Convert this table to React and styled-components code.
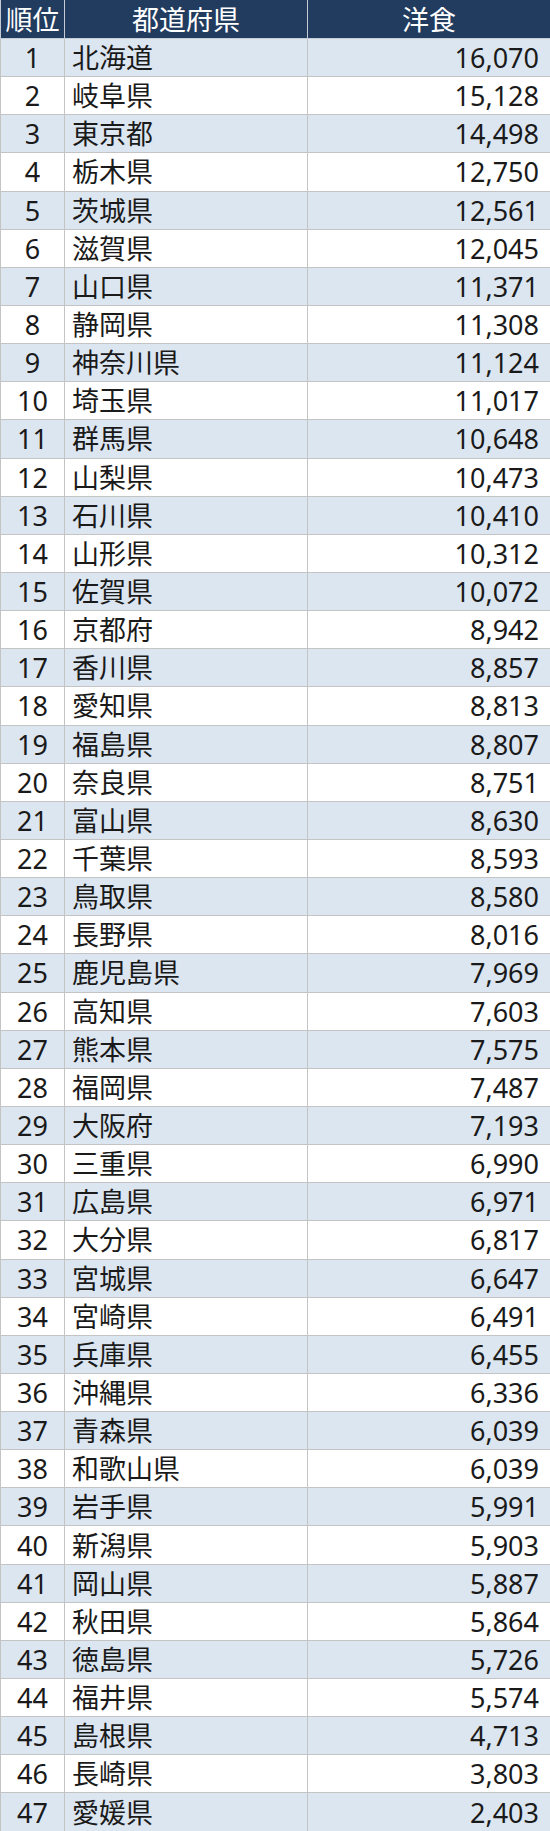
import React from 'react'
import styled, { createGlobalStyle } from 'styled-components'

const rows = [
  ['北海道', '16,070'], ['岐阜県', '15,128'], ['東京都', '14,498'], ['栃木県', '12,750'],
  ['茨城県', '12,561'], ['滋賀県', '12,045'], ['山口県', '11,371'], ['静岡県', '11,308'],
  ['神奈川県', '11,124'], ['埼玉県', '11,017'], ['群馬県', '10,648'], ['山梨県', '10,473'],
  ['石川県', '10,410'], ['山形県', '10,312'], ['佐賀県', '10,072'], ['京都府', '8,942'],
  ['香川県', '8,857'], ['愛知県', '8,813'], ['福島県', '8,807'], ['奈良県', '8,751'],
  ['富山県', '8,630'], ['千葉県', '8,593'], ['鳥取県', '8,580'], ['長野県', '8,016'],
  ['鹿児島県', '7,969'], ['高知県', '7,603'], ['熊本県', '7,575'], ['福岡県', '7,487'],
  ['大阪府', '7,193'], ['三重県', '6,990'], ['広島県', '6,971'], ['大分県', '6,817'],
  ['宮城県', '6,647'], ['宮崎県', '6,491'], ['兵庫県', '6,455'], ['沖縄県', '6,336'],
  ['青森県', '6,039'], ['和歌山県', '6,039'], ['岩手県', '5,991'], ['新潟県', '5,903'],
  ['岡山県', '5,887'], ['秋田県', '5,864'], ['徳島県', '5,726'], ['福井県', '5,574'],
  ['島根県', '4,713'], ['長崎県', '3,803'], ['愛媛県', '2,403'],
]

const App = () => {
  return (
    <>
      <GlobalStyle />
      <Table>
        <colgroup>
          <col style={{ width: 64 }} />
          <col style={{ width: 243 }} />
          <col style={{ width: 243 }} />
        </colgroup>
        <thead>
          <tr>
            <Th>順位</Th>
            <Th>都道府県</Th>
            <Th>洋食</Th>
          </tr>
        </thead>
        <tbody>
          {rows.map(([name, value], i) => (
            <Row key={name} $shaded={i % 2 === 0}>
              <Cell $align="center">{i + 1}</Cell>
              <Cell $align="left">{name}</Cell>
              <Cell $align="right">{value}</Cell>
            </Row>
          ))}
        </tbody>
      </Table>
    </>
  )
}

export default App

const GlobalStyle = createGlobalStyle`
  body {
    margin: 0;
    background: #fff;
    font-family: "Noto Sans", "Noto Sans CJK JP", sans-serif;
  }
`

const Table = styled.table`
  width: 550px;
  table-layout: fixed;
  border-collapse: collapse;
  font-size: 27px;
  color: #1a1a1a;
`

const Th = styled.th`
  height: 38px;
  padding: 0;
  background: #223c5f;
  color: #fff;
  font-weight: 400;
  text-align: center;
  line-height: 1;
  border: 1px solid #c6ccd4;
  border-top: none;
`

const Row = styled.tr`
  background: ${p => (p.$shaded ? '#dce6f1' : '#ffffff')};
`

const Cell = styled.td`
  height: 37.15px;
  padding: 0 ${p => (p.$align === 'right' ? '11px' : p.$align === 'left' ? '7px' : '0')};
  text-align: ${p => p.$align};
  line-height: 1;
  border: 1px solid #c4c4c4;
  white-space: nowrap;
`
